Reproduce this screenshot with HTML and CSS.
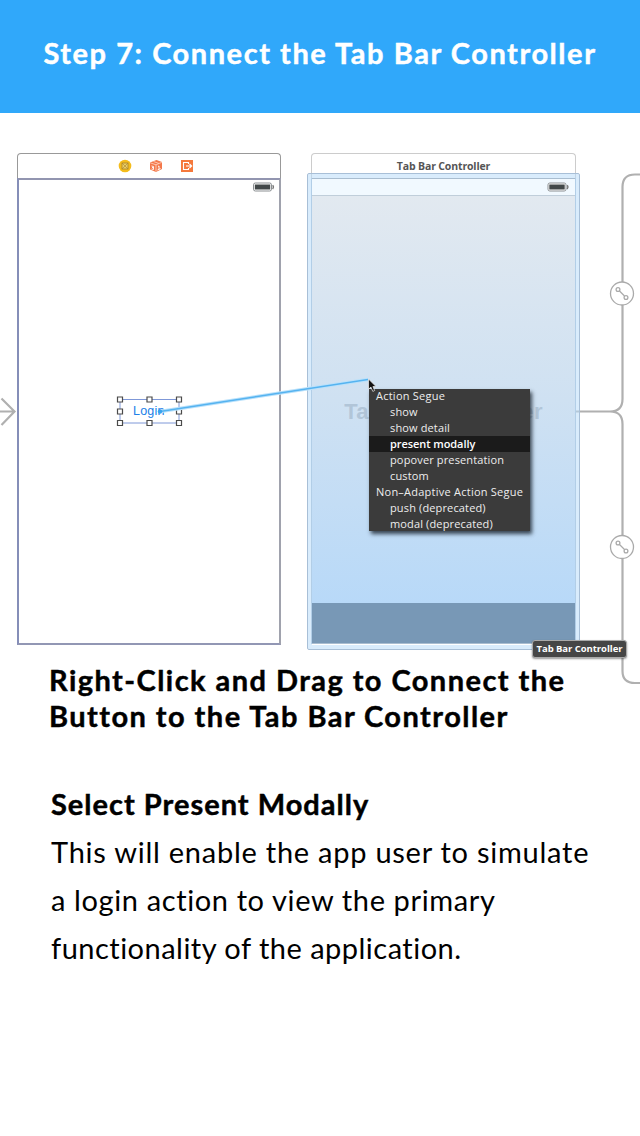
FILE: index.html
```
<!DOCTYPE html>
<html lang="en">
<head>
<meta charset="utf-8">
<title>Step 7: Connect the Tab Bar Controller</title>
<link rel="stylesheet" href="styles.css">
</head>
<body>
<header class="banner"><h1 class="banner-title">Step 7: Connect the Tab Bar Controller</h1></header>
<main>
<section class="canvas">
  <svg class="layer" width="640" height="580" viewBox="0 113 640 580" fill="none">
    <g stroke="#b0b0b0" stroke-width="2.2">
      <path d="M0 411.500H15M1.500 398.500L14.500 411.500L1.500 425"/>
      <path d="M575 411.500H610Q622.500 411.500 622.500 399V187Q622.500 174.500 635 174.500H641M610 411.500Q622.500 411.500 622.500 424V671Q622.500 683 635 683H641"/>
    </g>
    <g stroke="#aaa" stroke-width="1.300">
      <g id="segue"><circle cx="622" cy="293.500" r="11.500" fill="#fff"/><circle cx="618" cy="289.500" r="1.900"/><circle cx="626" cy="297.500" r="1.900"/><path d="M619.500 291L624.500 296"/></g>
      <use href="#segue" y="253.500"/>
    </g>
  </svg>

  <div class="scene login-scene">
    <div class="scene-dock">
      <svg width="14" height="14" viewBox="0 0 14 14"><circle cx="7" cy="7" r="6.300" fill="#f4bc1c"/><rect x="4" y="4" width="6" height="6" fill="#e9ce65" stroke="#a9822c" stroke-width=".8"/><path d="M4 4L10 10M10 4L4 10" stroke="#a9822c" stroke-width=".6"/></svg>
      <svg width="14" height="14" viewBox="0 0 14 14"><path d="M1 3.500L7.500 1L13 3V10L7 13L1 10.500Z" fill="#f4784a"/><path d="M1.200 3.800L7 5.800L12.800 3.300M7 5.800V12.500M4.500 2.500L10 4.500" fill="none" stroke="#ffd8c7" stroke-width=".8"/><path d="M2.500 7L4.500 7.500V10.500L2.500 10M3 8.500H4.500M9 7.500L10 7V10.500M8.500 11L11.500 9.500" fill="none" stroke="#fff" stroke-width=".9"/></svg>
      <svg width="14" height="14" viewBox="0 0 14 14"><rect x="1" y="1" width="12" height="12" fill="#f5793c"/><path d="M8.500 5V3.500H3.500V10.500H8.500V9M6 7H11.500M9.500 5L11.700 7L9.500 9" fill="none" stroke="#fff" stroke-width="1.100"/></svg>
    </div>
    <div class="login-screen"></div>
  </div>

  <div class="scene tab-scene">
    <div class="scene-title">Tab Bar Controller</div>
    <div class="tab-screen">
      <div class="status-strip"></div>
      <div class="tab-content"><span class="placeholder">Tab Bar Controller</span></div>
      <div class="tab-strip"></div>
    </div>
  </div>
  <div class="halo"></div>

  <div class="login-button">Login</div>
  <svg class="layer" width="640" height="580" viewBox="0 113 640 580" fill="none">
    <g id="battery"><rect x="253.500" y="183" width="18" height="8" rx="1.800" fill="#fff" stroke="#8b8f92"/><rect x="254.800" y="184.500" width="15.400" height="5" fill="#424849"/><path d="M272.600 185.300Q274.300 187 272.600 189" stroke="#777" stroke-width="1.300"/></g>
    <use href="#battery" x="294.500"/>
    <rect x="120" y="399.500" width="59" height="23.500" stroke="#7f98d8"/>
    <g fill="#fff" stroke="#4b4b4b" stroke-width="1.200">
      <path d="M117.500 397h5v5h-5zM147 397h5v5h-5zM176.500 397h5v5h-5zM117.500 409h5v5h-5zM176.500 409h5v5h-5zM117.500 420.500h5v5h-5zM147 420.500h5v5h-5zM176.500 420.500h5v5h-5z"/>
    </g>
    <path d="M160 411.500L368 379.500" stroke="#b9e1fb" stroke-width="3.400"/>
    <path d="M160 411.500L368 379.500" stroke="#55b3f0" stroke-width="1.400"/>
    <circle cx="160" cy="411.500" r="2.200" fill="#39a3ef"/>
  </svg>

  <div class="menu">
    <div class="menu-group">Action Segue</div>
    <div class="menu-item">show</div>
    <div class="menu-item">show detail</div>
    <div class="menu-item selected">present modally</div>
    <div class="menu-item">popover presentation</div>
    <div class="menu-item">custom</div>
    <div class="menu-group">Non–Adaptive Action Segue</div>
    <div class="menu-item">push (deprecated)</div>
    <div class="menu-item">modal (deprecated)</div>
  </div>
  <svg class="cursor" width="11" height="15" viewBox="0 0 9 14"><path d="M.8 1V10.500L3 8.500L4.800 12.500L6.500 11.700L4.900 8H7.800Z" fill="#111" stroke="#eee" stroke-width=".7"/></svg>
  <div class="tooltip">Tab Bar Controller</div>
</section>

<section class="copy">
  <h2 class="lead">Right-Click and Drag to Connect the<br>Button to the Tab Bar Controller</h2>
  <h3 class="sub">Select Present Modally</h3>
  <p class="body-text">This will enable the app user to simulate<br><span class="line-snug">a login action to view the primary</span><br><span class="line-tight">functionality of the application.</span></p>
</section>
</main>
</body>
</html>
```
FILE: styles.css
```
* { box-sizing: border-box; }
body { margin: 0; width: 640px; height: 1136px; overflow: hidden; background: #fff; color: #000; font-family: Lato, "Open Sans", sans-serif; }
h1, h2, h3, p { margin: 0; white-space: nowrap; }
h1, h2, h3 { -webkit-text-stroke: .45px currentColor; }
.banner { height: 113px; background: #30a8fa; display: flex; justify-content: center; padding-top: 35px; }
.banner-title { color: #fff; font-size: 29px; line-height: 36px; font-weight: 700; letter-spacing: 1.55px; }

.canvas { position: relative; height: 549px; }
.layer { position: absolute; left: 0; top: 0; pointer-events: none; }
.scene { position: absolute; top: 40px; height: 492px; width: 264px; display: flex; flex-direction: column; }
.login-scene { left: 17px; }
.tab-scene { left: 311px; width: 265px; height: 491px; }
.scene-dock, .scene-title { height: 25px; border: 1px solid #999; border-bottom: 0; border-radius: 4px 4px 0 0; }
.scene-dock { display: flex; justify-content: center; align-items: center; gap: 17px; padding-left: 14px; }
.login-screen { flex: 1; border: 2px solid #a0a2ad; border-left-color: #858eb8; border-top-color: #9295b0; border-bottom-color: #9297b4; }
.scene-title { border-color: #ccc; text-align: center; font: 700 10.5px/24px "Open Sans", sans-serif; letter-spacing: -.15px; color: #555; }
.tab-screen { flex: 1; border: 1px solid #a9bdd0; display: flex; flex-direction: column; }
.status-strip { height: 17px; background: #f1f9ff; border-bottom: 1px solid #c0ceda; }
.tab-content { flex: 1; background: linear-gradient(#e2e9f0, #cfe1f2 50%, #b8d9f8); display: flex; justify-content: center; }
.tab-strip { height: 40px; background: #7898b6; }
.placeholder { font: 700 22px/26px "Liberation Sans", sans-serif; color: #b1c5d8; white-space: nowrap; padding-top: 203px; letter-spacing: .4px; }
.halo { position: absolute; left: 307px; top: 60px; width: 273px; height: 477px; border: 1px solid #a8bfd7; border-radius: 2px; box-shadow: inset 0 0 0 4px rgba(185,221,250,.55); }
.login-button { position: absolute; left: 133px; top: 291px; font: 12.5px/15px "Liberation Sans", sans-serif; color: #2180e8; letter-spacing: .2px; }

.menu { position: absolute; left: 369px; top: 276px; width: 161px; height: 142px; background: #3b3b3b; color: #eee; box-shadow: 2px 3px 4px rgba(20,30,40,.8); font: 500 11px/16px "Open Sans", sans-serif; letter-spacing: .24px; white-space: nowrap; }
.menu-group { height: 16px; padding-left: 7px; }
.menu-group:first-child { height: 15px; line-height: 14px; }
.menu-item { height: 16px; padding-left: 21px; letter-spacing: .14px; }
.selected { background: #1b1b1b; color: #fff; font-weight: 600; letter-spacing: -.07px; }
.cursor { position: absolute; left: 367px; top: 265px; }
.tooltip { position: absolute; left: 532px; top: 527px; width: 95px; height: 18px; border: 1px solid #aaa; border-radius: 3px; background: #464646; color: #fff; text-align: center; font: 700 9.5px/16px "Open Sans", sans-serif; letter-spacing: -.05px; box-shadow: 0 1px 2px rgba(0,0,0,.4); white-space: nowrap; }

.lead { padding-left: 49px; font-size: 29px; line-height: 36px; font-weight: 700; letter-spacing: 1.45px; }
.sub { padding: 54px 0 0 51px; font-size: 29px; line-height: 32px; font-weight: 700; letter-spacing: 1px; }
.body-text { padding: 8px 0 0 51px; font-size: 29px; line-height: 48px; letter-spacing: .75px; }
.line-snug { letter-spacing: .62px; }
.line-tight { letter-spacing: .48px; }
```
